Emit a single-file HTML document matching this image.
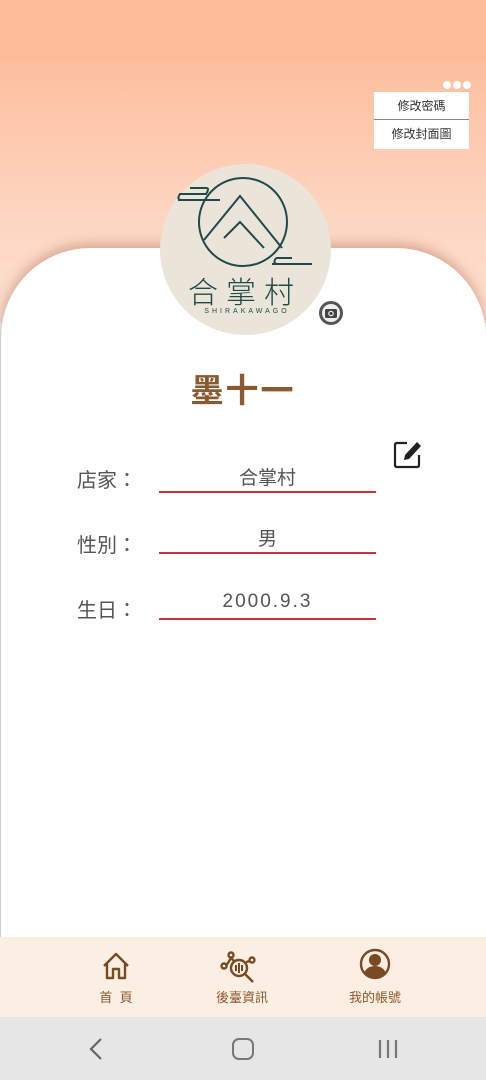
<!DOCTYPE html>
<html><head><meta charset="utf-8"><style>
*{margin:0;padding:0;box-sizing:border-box}
body{width:486px;height:1080px;overflow:hidden;position:relative;font-family:"Liberation Sans","Noto Sans CJK TC",sans-serif;background:#fff}
.status{position:absolute;left:0;top:0;width:486px;height:63px;background:#fdbb98}
.grad{position:absolute;left:0;top:63px;width:486px;height:260px;background:linear-gradient(#fdbf9f,#fdd9c6 70%,#fde0d0)}
.card{position:absolute;left:0;top:248px;width:486px;height:700px;background:#fff;border-radius:90px 90px 0 0;box-shadow:0 -4px 12px rgba(170,100,70,.45);border-left:1px solid #ccc}
.menu{position:absolute;left:374px;width:95px;height:28px;background:#fff;font-size:12px;color:#333;text-align:center;line-height:28px}
.dots{position:absolute;left:443px;top:76px}
.dots i{display:inline-block;width:8px;height:8px;border-radius:50%;background:#fff;margin-right:2px}
.avatar{position:absolute;left:160px;top:164px;width:171px;height:171px;border-radius:50%;background:#ebe5d9}
.name{position:absolute;left:0;width:486px;top:364px;text-align:center;font-size:33px;font-weight:bold;color:#8a5a2e;letter-spacing:2px}
.lab{position:absolute;left:77px;font-size:20px;color:#555}
.val{position:absolute;left:159px;width:217px;text-align:center;font-size:19px;color:#555;border-bottom:2px solid #c8323a;height:33px}
.nav{position:absolute;left:0;top:937px;width:486px;height:80px;background:#fbeee3}
.nav div{position:absolute;font-size:13px;color:#8a5a2e;transform:translateX(-50%);white-space:nowrap;top:50px}
.sys{position:absolute;left:0;top:1017px;width:486px;height:63px;background:#e6e6e6}
</style></head><body>
<div class="status"></div>
<div class="grad"></div>
<div class="card"></div>
<div class="dots"><i></i><i></i><i></i></div>
<div class="menu" style="top:92px;border-bottom:1px solid #888">修改密碼</div>
<div class="menu" style="top:120px;height:29px">修改封面圖</div>
<div class="avatar"></div>
<svg style="position:absolute;left:160px;top:164px" width="171" height="171" viewBox="0 0 171 171">
<g fill="none" stroke="#1f4a4a" stroke-width="2">
<circle cx="83" cy="58" r="44"/>
<path d="M44 76 L80 32 L122 84"/><path d="M64 74 L80 58 L104 84"/>
<path d="M18 36 H60 M30 24 H46 Q50 24 46 30 H20 Q16 36 22 36"/>
<path d="M112 100 H152 M116 94 Q112 100 118 100 M116 94 H132"/>
</g>
<text x="85" y="139" text-anchor="middle" font-size="30" fill="#1f4a4a" font-family="Noto Sans CJK TC,sans-serif" font-weight="300" letter-spacing="8">合掌村</text>
<text x="87" y="149" text-anchor="middle" font-size="7" fill="#1f4a4a" letter-spacing="3">SHIRAKAWAGO</text>
</svg>
<svg style="position:absolute;left:318px;top:300px" width="26" height="26"><circle cx="13" cy="13" r="12" fill="#555"/><circle cx="13" cy="13" r="9" fill="#eee"/><rect x="7" y="9" width="12" height="9" rx="1.5" fill="#444"/><circle cx="13" cy="13.5" r="2.8" fill="#eee"/><circle cx="13" cy="13.5" r="1.6" fill="#444"/></svg>
<div class="name">墨十一</div>
<svg style="position:absolute;left:393px;top:439px" width="30" height="30" viewBox="0 0 30 30"><path d="M14 4 H4 Q2 4 2 6 V26 Q2 28 4 28 H24 Q26 28 26 26 V16" fill="none" stroke="#222" stroke-width="2.2"/><path d="M11 21 L12 16 L24 3 L28 7 L16 20 Z" fill="#222"/></svg>
<div class="lab" style="top:464px">店家：</div>
<div class="val" style="top:460px;padding-top:3px">合掌村</div>
<div class="lab" style="top:529px">性別：</div>
<div class="val" style="top:521px;padding-top:3px">男</div>
<div class="lab" style="top:594px">生日：</div>
<div class="val" style="top:587px;padding-top:4px;font-size:19px;letter-spacing:2px">2000.9.3</div>
<div class="nav">
<svg style="position:absolute;left:100px;top:14px" width="32" height="30" viewBox="0 0 32 30"><path d="M4 15 L16 3 L28 15 M7 12 V27 H13 V18 H19 V27 H25 V12" fill="none" stroke="#7a4a22" stroke-width="2.4" stroke-linejoin="round"/></svg>
<svg style="position:absolute;left:220px;top:14px" width="38" height="36" viewBox="0 0 38 36"><g fill="none" stroke="#7a4a22" stroke-width="2.4"><circle cx="19" cy="17" r="8"/><circle cx="11" cy="4" r="2.5"/><circle cx="4" cy="15" r="2.5"/><circle cx="32" cy="9" r="2.5"/><path d="M6 15 L11 7 L15 11 M26 11 L30 10 M25 23 L33 31"/></g><path d="M16 14 V20 M19 12 V22 M22 14 V20" stroke="#7a4a22" stroke-width="2"/></svg>
<svg style="position:absolute;left:359px;top:11px" width="32" height="32" viewBox="0 0 32 32"><circle cx="16" cy="16" r="14" fill="none" stroke="#7a4a22" stroke-width="2.4"/><circle cx="16" cy="12" r="6" fill="#7a4a22"/><path d="M5 25 Q8 18 16 18 Q24 18 27 25 Q22 30 16 30 Q10 30 5 25Z" fill="#7a4a22"/></svg>
<div style="left:116px">首&nbsp;&nbsp;頁</div>
<div style="left:242px">後臺資訊</div>
<div style="left:375px">我的帳號</div>
</div>
<div class="sys">
<svg style="position:absolute;left:88px;top:20px" width="16" height="24"><path d="M13 2 L3 12 L13 22" fill="none" stroke="#666" stroke-width="2.2"/></svg>
<div style="position:absolute;left:232px;top:21px;width:22px;height:22px;border:2.2px solid #777;border-radius:7px"></div>
<svg style="position:absolute;left:377px;top:22px" width="26" height="20"><path d="M3 1V19M11 1V19M19 1V19" stroke="#777" stroke-width="2.2"/></svg>
</div>
</body></html>
